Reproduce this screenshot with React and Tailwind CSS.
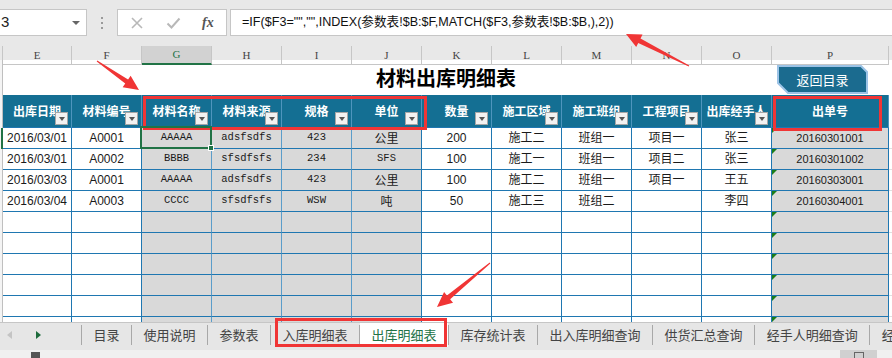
import React from "react";

const sans = "font-['Liberation_Sans','Noto_Sans_CJK_SC',sans-serif]";
const mono = "font-['Liberation_Mono','Noto_Sans_CJK_SC',monospace]";
const cjk = "font-['Noto_Sans_CJK_SC',sans-serif]";
const serif = "font-['Liberation_Serif',serif]";

const GRID =
  "grid grid-cols-[3px_69px_70px_70px_70px_70px_70px_70px_70px_70px_70px_70px_117px_1fr]";

const letters = ["E", "F", "G", "H", "I", "J", "K", "L", "M", "N", "O", "P"];

const headers = [
  "出库日期",
  "材料编号",
  "材料名称",
  "材料来源",
  "规格",
  "单位",
  "数量",
  "施工区域",
  "施工班组",
  "工程项目",
  "出库经手人",
  "出单号",
];

const data = [
  ["2016/03/01", "A0001", "AAAAA", "adsfsdfs", "423", "公里", "200", "施工二", "班组一", "项目一", "张三", "20160301001"],
  ["2016/03/01", "A0002", "BBBB", "sfsdfsfs", "234", "SFS", "100", "施工一", "班组一", "项目二", "张三", "20160301002"],
  ["2016/03/03", "A0001", "AAAAA", "adsfsdfs", "423", "公里", "100", "施工二", "班组一", "项目一", "王五", "20160303001"],
  ["2016/03/04", "A0003", "CCCC", "sfsdfsfs", "WSW", "吨", "50", "施工三", "班组二", "", "李四", "20160304001"],
  ["", "", "", "", "", "", "", "", "", "", "", ""],
  ["", "", "", "", "", "", "", "", "", "", "", ""],
  ["", "", "", "", "", "", "", "", "", "", "", ""],
  ["", "", "", "", "", "", "", "", "", "", "", ""],
  ["", "", "", "", "", "", "", "", "", "", "", ""],
  ["", "", "", "", "", "", "", "", "", "", "", ""],
];

const tabs = ["目录", "使用说明", "参数表", "入库明细表", "出库明细表", "库存统计表", "出入库明细查询", "供货汇总查询", "经手人明细查询", "经"];

// red arrow used for the annotations
const arrow = (tx, ty, px, py) => {
  const dx = px - tx;
  const dy = py - ty;
  const len = Math.hypot(dx, dy);
  const ux = dx / len;
  const uy = dy / len;
  const nx = -uy;
  const ny = ux;
  const bx = px - ux * 15;
  const by = py - uy * 15;
  const pts = [
    [tx + nx * 0.5, ty + ny * 0.5],
    [bx + nx * 2.5, by + ny * 2.5],
    [bx + nx * 7, by + ny * 7],
    [px, py],
    [bx - nx * 7, by - ny * 7],
    [bx - nx * 2.5, by - ny * 2.5],
    [tx - nx * 0.5, ty - ny * 0.5],
  ];
  return pts.map((p) => p.join(",")).join(" ");
};

const FilterButton = () => (
  <div className="absolute right-[3px] bottom-[2px] w-[13px] h-[13px] bg-[#f2f2f2] border border-[#a6a6a6] flex items-center justify-center">
    <div className="w-0 h-0 border-l-[3.5px] border-r-[3.5px] border-t-[4px] border-l-transparent border-r-transparent border-t-[#555]" />
  </div>
);

const DataCell = ({ value, i, selected }) => {
  const inGray = i >= 2 && i <= 5;
  const isCjk = /[\u4e00-\u9fff]/.test(value);
  let font = "text-[12px] " + sans;
  if (inGray) font = isCjk ? "text-[12px] " + cjk : "text-[10.5px] " + mono;
  if (i === 11) font = "text-[11px] " + sans;
  const bg = inGray || i === 11 ? "bg-[#d9d9d9]" : "bg-white";
  const right = i >= 2 && i <= 4 ? "border-r-[#5b9dca]" : "border-r-[#1f77b1]";

  return (
    <div
      className={`relative h-[21px] border-r border-b border-b-[#1f77b1] ${right} ${bg} flex items-center justify-center text-[#1a1a1a] whitespace-nowrap`}
    >
      <span className={font}>{value}</span>
      {i === 11 && (
        <div className="absolute top-0 left-0 w-0 h-0 border-t-[5px] border-t-[#1a7d1a] border-r-[5px] border-r-transparent" />
      )}
      {selected && (
        <div className="absolute left-[-2px] top-[-2px] right-[-1px] bottom-[-1px] border-2 border-[#217346] z-10">
          <div className="absolute right-[-4px] bottom-[-4px] w-[6px] h-[6px] bg-[#217346] border border-white" />
        </div>
      )}
    </div>
  );
};

const App = () => {
  return (
    <div className="relative w-[892px] h-[358px] overflow-hidden bg-white select-none">
      {/* formula bar */}
      <div className="h-[46px] bg-[#e8e8e8] pt-[9px] flex items-start">
        <div className="relative shrink-0 w-[87px] h-[27px] bg-white border border-l-0 border-[#c6c6c6] flex items-center">
          <span className={`pl-[1px] text-[15px] text-[#222] ${sans}`}>3</span>
          <div className="absolute right-[6px] top-[11px] w-0 h-0 border-l-[4px] border-r-[4px] border-t-[4px] border-l-transparent border-r-transparent border-t-[#666]" />
        </div>
        <div className="shrink-0 w-[30px] h-[27px] flex flex-col items-center justify-center gap-[3px]">
          <div className="w-[2px] h-[2px] bg-[#9a9a9a]" />
          <div className="w-[2px] h-[2px] bg-[#9a9a9a]" />
          <div className="w-[2px] h-[2px] bg-[#9a9a9a]" />
        </div>
        <div className="shrink-0 w-[110px] h-[27px] bg-white border border-[#c6c6c6] flex items-center">
          <svg className="ml-[12px]" width="14" height="14" viewBox="0 0 14 14">
            <path d="M2 2 L12 12 M12 2 L2 12" stroke="#b8b8b8" strokeWidth="1.6" fill="none" />
          </svg>
          <svg className="ml-[22px]" width="15" height="14" viewBox="0 0 15 14">
            <path d="M1.5 7.5 L5.5 11.5 L13.5 2.5" stroke="#b8b8b8" strokeWidth="2" fill="none" />
          </svg>
          <span className={`ml-[21px] text-[14px] italic font-bold text-[#555] ${serif}`}>fx</span>
        </div>
        <div className="ml-[3px] flex-1 h-[27px] bg-white border border-r-0 border-[#c6c6c6] flex items-center">
          <span className={`pl-[11px] text-[12.6px] text-[#111] whitespace-nowrap ${sans}`}>
            =IF($F3="","",INDEX(参数表!$B:$F,MATCH($F3,参数表!$B:$B,),2))
          </span>
        </div>
      </div>

      {/* column letters */}
      <div className={`${GRID} h-[14px] bg-[#e8e8e8]`}>
        <div className="border-r border-[#c6c6c6]" />
        {letters.map((l) => (
          <div
            key={l}
            className={
              l === "G"
                ? `bg-[#d2d2d2] border-r border-[#c6c6c6] border-b-2 border-b-[#217346] flex items-center justify-center text-[11px] text-[#217346] ${serif}`
                : `border-r border-b border-[#c6c6c6] flex items-center justify-center text-[11px] text-[#444] ${serif}`
            }
          >
            {l}
          </div>
        ))}
        <div className="border-b border-[#c6c6c6]" />
      </div>

      {/* sheet */}
      <div className="h-[262px] overflow-hidden">
        {/* title row */}
        <div className={`${GRID} h-[35px]`}>
          <div className="bg-[#f4f4f4] border-r border-[#bfbfbf]" />
          <div className="col-span-12 relative flex items-center justify-center">
            <span className={`text-[20px] font-bold text-black ${cjk}`}>材料出库明细表</span>
            <div className="absolute left-[774px] top-[5px] w-[91px] h-[29px]">
              <svg className="absolute inset-0" width="91" height="29" viewBox="0 0 91 29">
                <polygon
                  points="1,1 84,1 90,7 90,28 11,28 1,18"
                  fill="#1b6b8f"
                  stroke="#9cc3e6"
                  strokeWidth="2"
                />
              </svg>
              <div className={`relative h-full flex items-center justify-center text-[13px] text-white ${cjk}`}>
                返回目录
              </div>
            </div>
          </div>
          <div className="bg-white" />
        </div>

        {/* header row */}
        <div className={`${GRID} h-[33px]`}>
          <div className="bg-[#f4f4f4] border-r border-[#bfbfbf]" />
          {headers.map((h, i) => (
            <div
              key={h}
              className="relative bg-[#146f93] border-r border-r-[#4f95bd] border-b border-b-[#1f77b1] flex items-center justify-center overflow-hidden whitespace-nowrap"
            >
              <span className={`text-[12px] font-bold text-white ${cjk}`}>{h}</span>
              {i !== 11 && <FilterButton />}
            </div>
          ))}
          <div className="bg-white" />
        </div>

        {/* data rows */}
        {data.map((row, r) => (
          <div key={r} className={GRID}>
            <div
              className={
                r === 0
                  ? "bg-[#f4f4f4] border-r-2 border-[#217346]"
                  : "bg-[#f4f4f4] border-r border-[#bfbfbf]"
              }
            />
            {row.map((v, i) => (
              <DataCell key={i} value={v} i={i} selected={r === 0 && i === 2} />
            ))}
            <div className="bg-white border-b border-[#e0e0e0]" />
          </div>
        ))}
      </div>

      {/* sheet tabs */}
      <div className="h-[28px] bg-[#e6e6e6] border-t border-[#c6c6c6] flex items-start">
        <div className="shrink-0 w-[81px] h-[24px] flex items-center">
          <svg className="ml-[7px]" width="5" height="8" viewBox="0 0 5 8">
            <polygon points="5,0 5,8 0,4" fill="#c4c4c4" />
          </svg>
          <svg className="ml-[24px]" width="5" height="8" viewBox="0 0 5 8">
            <polygon points="0,0 0,8 5,4" fill="#1d6b3c" />
          </svg>
        </div>
        {tabs.map((t) => (
          <div key={t} className="shrink-0 flex items-center h-[24px]">
            <div className="w-px h-[20px] bg-[#a8a8a8]" />
            <div
              className={
                t === "出库明细表"
                  ? `h-[24px] px-[11.5px] bg-white flex items-center text-[13px] text-[#217346] whitespace-nowrap ${cjk}`
                  : `h-[24px] px-[11.5px] flex items-center text-[13px] text-[#444] whitespace-nowrap ${cjk}`
              }
            >
              {t}
            </div>
          </div>
        ))}
      </div>

      {/* status bar */}
      <div className="h-[8px] bg-[#f0f0f0] flex items-start">
        <div className="ml-[31px] mt-[2px] w-[9px] h-[6px] bg-[#555]" />
        <div className="ml-auto mr-[15px] w-[37px] h-[8px] bg-[#d0d0d0] flex justify-center pt-[2px]">
          <div className="w-[10px] h-[6px] border border-b-0 border-[#666]" />
        </div>
      </div>

      {/* red annotations */}
      <svg className="absolute inset-0 pointer-events-none" width="892" height="358" viewBox="0 0 892 358">
        <rect x="144.5" y="97.5" width="281" height="31" fill="none" stroke="#f03535" strokeWidth="3" />
        <rect x="774.5" y="97.5" width="106" height="32" fill="none" stroke="#f03535" strokeWidth="3" />
        <rect x="276.5" y="319.5" width="169" height="26" fill="none" stroke="#f03535" strokeWidth="3" />
        <polygon points={arrow(97, 61, 139, 90)} fill="#f03535" />
        <polygon points={arrow(689, 66, 626, 34)} fill="#f03535" />
        <polygon points={arrow(490, 263, 437, 307)} fill="#f03535" />
      </svg>
    </div>
  );
};

export default App;
